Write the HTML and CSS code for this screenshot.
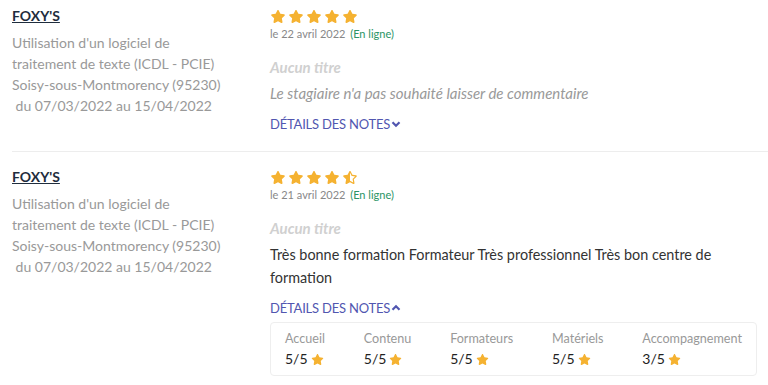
FILE: index.html
```html
<!DOCTYPE html>
<html lang="fr">
<head>
<meta charset="utf-8">
<link rel="stylesheet" href="styles.css">
</head>
<body>
<svg width="0" height="0" class="defs">
  <defs>
    <symbol id="star" viewBox="0 0 576 512"><path d="M259.3 17.8L194 150.2 47.9 171.5c-26.2 3.8-36.7 36.1-17.7 54.6l105.7 103-25 145.5c-4.5 26.3 23.2 46 46.4 33.7L288 439.6l130.7 68.7c23.2 12.2 50.9-7.4 46.4-33.7l-25-145.5 105.7-103c19-18.5 8.5-50.8-17.7-54.6L382 150.2 316.7 17.8c-11.7-23.6-45.600-23.900-57.400 0z"/></symbol>
    <symbol id="star-half" viewBox="-20 0 576 512"><path d="M508.55 171.51L362.18 150.2 296.77 17.81C290.89 5.98 279.42 0 267.95 0c-11.4 0-22.79 5.9-28.69 17.81l-65.43 132.38-146.38 21.29c-26.25 3.8-36.77 36.09-17.74 54.59l105.89 103-25.06 145.48C86.98 495.33 103.57 512 122.15 512c4.93 0 10-1.17 14.87-3.75l130.95-68.68 130.94 68.7c4.86 2.55 9.92 3.710 14.83 3.710 18.6 0 35.22-16.61 31.66-37.4l-25.03-145.49 105.91-102.98c19.04-18.5 8.52-50.8-17.73-54.6zm-121.74 123.2l-18.12 17.62 4.28 24.88 19.52 113.45-102.13-53.59-22.38-11.74 0.03-317.19 51.03 103.29 11.18 22.63 25.01 3.64 114.23 16.63-82.65 80.38z"/></symbol>
  </defs>
</svg>
<div class="reviews">
  <div class="review">
    <div class="info">
      <a class="org">FOXY'S</a>
      <p class="course">Utilisation d'un logiciel de traitement de texte (ICDL - PCIE)<br>Soisy-sous-Montmorency (95230)<br>&nbsp;du 07/03/2022 au 15/04/2022</p>
    </div>
    <div class="content">
      <div class="stars">
        <svg><use href="#star"/></svg><svg><use href="#star"/></svg><svg><use href="#star"/></svg><svg><use href="#star"/></svg><svg><use href="#star"/></svg>
      </div>
      <div class="date">le 22 avril 2022 <span class="mode">(En ligne)</span></div>
      <div class="title">Aucun titre</div>
      <p class="comment empty">Le stagiaire n'a pas souhaité laisser de commentaire</p>
      <a class="details">DÉTAILS DES NOTES <svg class="chev" viewBox="0 0 10 10"><path d="M1.5 3.2L5 6.7l3.5-3.5"/></svg></a>
    </div>
  </div>
  <div class="review">
    <div class="info">
      <a class="org">FOXY'S</a>
      <p class="course">Utilisation d'un logiciel de traitement de texte (ICDL - PCIE)<br>Soisy-sous-Montmorency (95230)<br>&nbsp;du 07/03/2022 au 15/04/2022</p>
    </div>
    <div class="content">
      <div class="stars">
        <svg><use href="#star"/></svg><svg><use href="#star"/></svg><svg><use href="#star"/></svg><svg><use href="#star"/></svg><svg><use href="#star-half"/></svg>
      </div>
      <div class="date">le 21 avril 2022 <span class="mode">(En ligne)</span></div>
      <div class="title">Aucun titre</div>
      <p class="comment">Très bonne formation Formateur Très professionnel Très bon centre de formation</p>
      <a class="details">DÉTAILS DES NOTES <svg class="chev" viewBox="0 0 10 10"><path d="M1.5 6.7L5 3.2l3.5 3.5"/></svg></a>
      <div class="notes">
        <div class="note"><div class="label">Accueil</div><div class="value">5/5 <svg><use href="#star"/></svg></div></div>
        <div class="note"><div class="label">Contenu</div><div class="value">5/5 <svg><use href="#star"/></svg></div></div>
        <div class="note"><div class="label">Formateurs</div><div class="value">5/5 <svg><use href="#star"/></svg></div></div>
        <div class="note"><div class="label">Matériels</div><div class="value">5/5 <svg><use href="#star"/></svg></div></div>
        <div class="note"><div class="label">Accompagnement</div><div class="value">3/5 <svg><use href="#star"/></svg></div></div>
      </div>
    </div>
  </div>
</div>
</body>
</html>
```
FILE: styles.css
```css
html, body {
  margin: 0;
  padding: 0;
  background: #fff;
}
body {
  font-family: Lato, "Open Sans", sans-serif;
  color: #333;
}
.defs {
  position: absolute;
  width: 0;
  height: 0;
}
.reviews {
  padding-left: 12px;
}
.review {
  display: grid;
  grid-template-columns: 258px 487px;
  padding: 8px 0 18px;
  border-bottom: 1px solid #ededed;
}
.review + .review {
  border-bottom: none;
  padding-top: 17px;
}
.info {
  margin-top: -3px;
}
.org {
  display: inline-block;
  font-size: 14px;
  font-weight: 700;
  color: #1f2d3d;
  text-decoration: underline;
  line-height: 21px;
}
.course {
  margin: 6px 0 0;
  font-size: 14px;
  line-height: 21px;
  color: #999;
  width: 210px;
}
.stars {
  display: flex;
  gap: 2px;
  color: #f5b231;
  height: 17px;
  align-items: center;
}
.stars svg {
  width: 16px;
  height: 13px;
  fill: currentColor;
}
.date {
  font-size: 11px;
  color: #888;
  margin-top: 2px;
  line-height: 14px;
}
.mode {
  color: #2a9466;
  margin-left: 2px;
}
.title {
  margin-top: 17px;
  font-size: 15px;
  font-style: italic;
  font-weight: 700;
  color: #d0d0d0;
  line-height: 18px;
}
.comment {
  margin: 6px 0 0;
  font-size: 14.4px;
  line-height: 23px;
  color: #333;
}
.comment.empty {
  font-size: 15px;
  font-style: italic;
  color: #999;
}
.details {
  display: inline-flex;
  align-items: center;
  gap: 1px;
  margin-top: 10px;
  font-size: 13px;
  line-height: 18px;
  color: #5156b0;
  letter-spacing: -0.2px;
}
.chev {
  width: 10px;
  height: 10px;
  fill: none;
  stroke: currentColor;
  stroke-width: 2.2;
}
.notes {
  margin-top: 5px;
  border: 1px solid #eee;
  border-radius: 4px;
  display: flex;
  justify-content: space-between;
  padding: 7px 14px 7px 14px;
}
.label {
  font-size: 12.6px;
  color: #999;
  line-height: 18px;
}
.value {
  margin-top: 2px;
  font-size: 14px;
  color: #222;
  line-height: 18px;
  display: flex;
  align-items: center;
  gap: 3px;
}
.value svg {
  width: 13px;
  height: 11px;
  fill: #f5b231;
}
```
